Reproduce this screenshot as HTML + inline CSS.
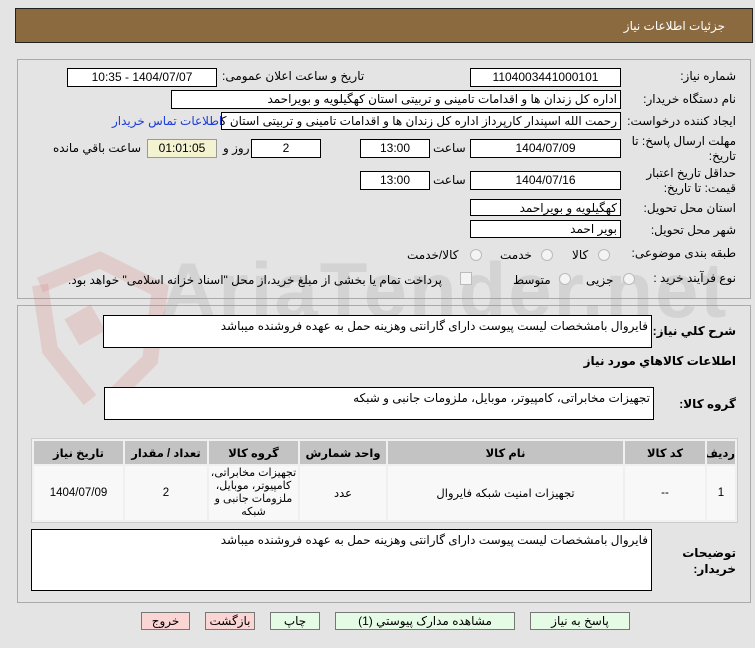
<!DOCTYPE html>
<html><head><meta charset="utf-8"><style>
*{margin:0;padding:0;box-sizing:border-box}
body{width:755px;height:648px;background:#e4e4e4;font-family:"Liberation Sans","DejaVu Sans",sans-serif;font-size:12px;color:#000;position:relative;overflow:hidden}
.a{position:absolute;white-space:nowrap}
.box{position:absolute;background:#fff;border:1px solid #000;font-size:12px;direction:rtl;padding:0 3px;line-height:17px;white-space:nowrap;overflow:hidden}
.c{text-align:center}
.lab{position:absolute;direction:rtl;font-size:12px;white-space:nowrap}
.rad{position:absolute;width:12px;height:12px;border-radius:50%;border:1px solid #bbb;background:#f4f4f4}
.btn{position:absolute;border:1px solid #777;height:18px;font-size:12px;text-align:center;line-height:16px;background:#e6fbe6}
.pink{background:#fbd4d4}
table{border-collapse:separate;border-spacing:2px;table-layout:fixed}
td{overflow:hidden;padding:0}
</style></head><body>
<div class="a" style="left:15px;top:8px;width:738px;height:35px;background:#8b6a40;border:1px solid #222"></div>
<div class="lab" style="right:30px;top:19px;color:#fff">جزئیات اطلاعات نیاز</div>

<div class="a" style="left:17px;top:59px;width:734px;height:240px;border:1px solid #aaa"></div>
<div class="a" style="left:17px;top:305px;width:734px;height:298px;border:1px solid #aaa"></div>

<!-- watermark -->
<svg class="a" style="left:20px;top:250px" width="160" height="170" viewBox="0 0 160 170"><path d="M20 35 L80 10 L140 40 L130 110 L90 150" fill="none" stroke="rgba(215,120,120,0.22)" stroke-width="16"/><path d="M20 35 L30 100 L70 150" fill="none" stroke="rgba(215,120,120,0.22)" stroke-width="16"/><rect x="50" y="60" width="30" height="30" fill="rgba(215,120,120,0.22)" transform="rotate(-30 65 75)"/></svg>
<div class="a" style="left:160px;top:245px;font-size:78px;font-weight:bold;color:rgba(150,150,150,0.22);letter-spacing:2px">AriaTender.net</div>

<div class="lab" style="right:19px;top:69px">شماره نیاز:</div>
<div class="box c" style="left:470px;top:68px;width:151px;height:19px">1104003441000101</div>
<div class="lab" style="left:222px;top:69px">تاریخ و ساعت اعلان عمومی:</div>
<div class="box c" style="left:67px;top:68px;width:150px;height:19px">1404/07/07 - 10:35</div>

<div class="lab" style="right:19px;top:92px">نام دستگاه خریدار:</div>
<div class="box" style="left:171px;top:90px;width:450px;height:19px">اداره کل زندان ها و اقدامات تامینی و تربیتی استان کهگیلویه و بویراحمد</div>

<div class="lab" style="right:19px;top:114px">ایجاد کننده درخواست:</div>
<div class="box" style="left:221px;top:112px;width:400px;height:18px">رحمت الله اسپندار کارپرداز اداره کل زندان ها و اقدامات تامینی و تربیتی استان کهگیلویه</div>
<div class="lab" style="left:112px;top:114px;color:#1a3cd8">اطلاعات تماس خریدار</div>

<div class="lab" style="right:19px;top:134px">مهلت ارسال پاسخ: تا</div>
<div class="lab" style="right:19px;top:149px">تاریخ:</div>
<div class="box c" style="left:470px;top:139px;width:151px;height:19px">1404/07/09</div>
<div class="lab" style="left:433px;top:141px">ساعت</div>
<div class="box c" style="left:360px;top:139px;width:70px;height:19px">13:00</div>
<div class="box c" style="left:251px;top:139px;width:70px;height:19px">2</div>
<div class="lab" style="left:223px;top:141px">روز و</div>
<div class="box c" style="left:147px;top:139px;width:70px;height:19px;background:#f3f3d2;border-color:#999">01:01:05</div>
<div class="lab" style="left:53px;top:141px">ساعت باقي مانده</div>

<div class="lab" style="right:19px;top:166px">حداقل تاریخ اعتبار</div>
<div class="lab" style="right:19px;top:181px">قیمت: تا تاریخ:</div>
<div class="box c" style="left:470px;top:171px;width:151px;height:19px">1404/07/16</div>
<div class="lab" style="left:433px;top:173px">ساعت</div>
<div class="box c" style="left:360px;top:171px;width:70px;height:19px">13:00</div>

<div class="lab" style="right:19px;top:201px">استان محل تحویل:</div>
<div class="box" style="left:470px;top:199px;width:151px;height:17px">کهگیلویه و بویراحمد</div>
<div class="lab" style="right:19px;top:223px">شهر محل تحویل:</div>
<div class="box" style="left:470px;top:220px;width:151px;height:18px">بویر احمد</div>

<div class="lab" style="right:19px;top:246px">طبقه بندی موضوعی:</div>
<div class="rad" style="left:598px;top:249px"></div><div class="lab" style="left:572px;top:248px">كالا</div>
<div class="rad" style="left:541px;top:249px"></div><div class="lab" style="left:500px;top:248px">خدمت</div>
<div class="rad" style="left:470px;top:249px"></div><div class="lab" style="left:407px;top:248px">كالا/خدمت</div>

<div class="lab" style="right:19px;top:271px">نوع فرآیند خرید :</div>
<div class="rad" style="left:623px;top:273px"></div><div class="lab" style="left:586px;top:273px">جزیی</div>
<div class="rad" style="left:559px;top:273px"></div><div class="lab" style="left:513px;top:273px">متوسط</div>
<div class="a" style="left:460px;top:272px;width:12px;height:13px;border:1px solid #bbb;background:#f4f4f4"></div>
<div class="lab" style="left:68px;top:273px">پرداخت تمام یا بخشی از مبلغ خرید،از محل "اسناد خزانه اسلامی" خواهد بود.</div>

<div class="lab" style="right:19px;top:324px;font-weight:bold">شرح کلي نیاز:</div>
<div class="box" style="left:103px;top:315px;width:549px;height:33px;line-height:20px">فایروال بامشخصات لیست پیوست دارای گارانتی وهزینه حمل به عهده فروشنده میباشد</div>
<div class="lab" style="right:19px;top:354px;font-weight:bold">اطلاعات کالاهاي مورد نیاز</div>
<div class="lab" style="right:19px;top:397px;font-weight:bold">گروه کالا:</div>
<div class="box" style="left:104px;top:387px;width:550px;height:33px;line-height:20px">تجهیزات مخابراتی، کامپیوتر، موبایل، ملزومات جانبی و شبکه</div>

<div class="a" style="left:31px;top:438px;width:707px;height:85px;border:1px solid #ccc;background:#f0f0f0"></div>
<div class="a" style="left:32px;top:439px;direction:rtl">
<table style="width:705px;direction:rtl;font-size:11.5px;text-align:center">
<colgroup><col style="width:28px"><col style="width:80px"><col style="width:235px"><col style="width:86px"><col style="width:89px"><col style="width:82px"><col></colgroup>
<tr style="background:#c3c3c3;font-weight:bold;height:23px"><td>ردیف</td><td>کد کالا</td><td>نام کالا</td><td>واحد شمارش</td><td>گروه کالا</td><td>تعداد / مقدار</td><td>تاریخ نیاز</td></tr>
<tr style="background:#f8f8f8;height:54px"><td>1</td><td>--</td><td>تجهیزات امنیت شبکه فایروال</td><td>عدد</td><td><div style="height:54px;overflow:hidden;line-height:13px;font-size:11px;white-space:normal;padding-top:1px">تجهیزات مخابراتی، کامپیوتر، موبایل، ملزومات جانبی و شبکه</div></td><td>2</td><td>1404/07/09</td></tr>
</table></div>

<div class="lab" style="right:19px;top:546px;font-weight:bold">توضیحات</div>
<div class="lab" style="right:19px;top:562px;font-weight:bold">خریدار:</div>
<div class="box" style="left:31px;top:529px;width:621px;height:62px;line-height:20px">فایروال بامشخصات لیست پیوست دارای گارانتی وهزینه حمل به عهده فروشنده میباشد</div>

<div class="btn" style="left:530px;top:612px;width:100px">پاسخ به نیاز</div>
<div class="btn" style="left:335px;top:612px;width:180px">مشاهده مدارک پیوستي (1)</div>
<div class="btn" style="left:270px;top:612px;width:50px">چاپ</div>
<div class="btn pink" style="left:205px;top:612px;width:50px">بازگشت</div>
<div class="btn pink" style="left:141px;top:612px;width:49px">خروج</div>
</body></html>
